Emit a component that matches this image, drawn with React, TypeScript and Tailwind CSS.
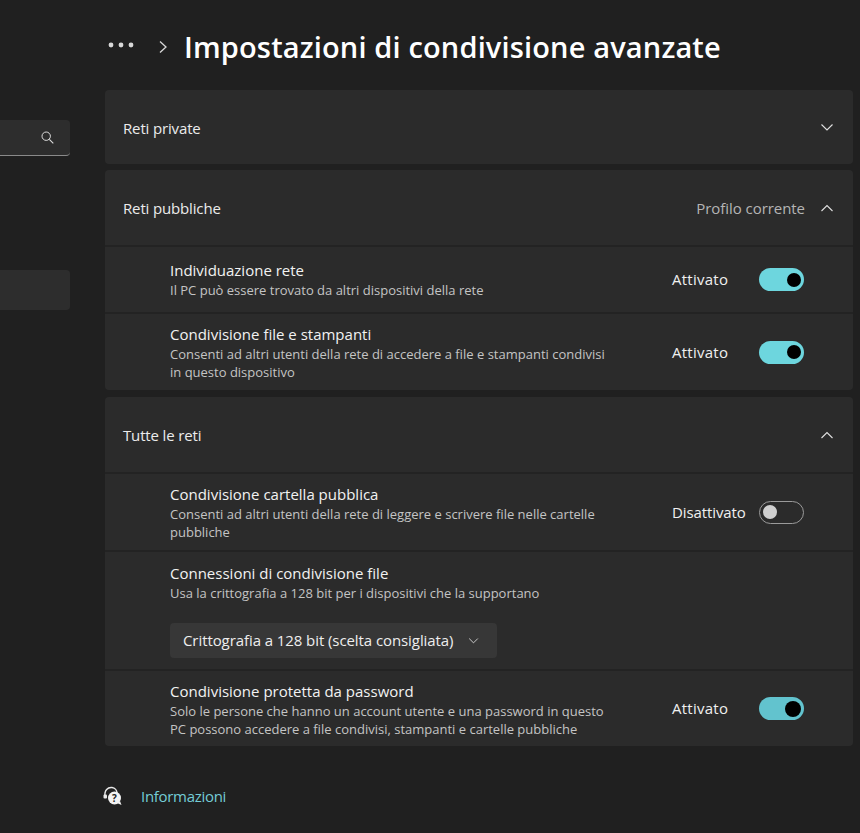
import React from "react";

const font = { fontFamily: '"Open Sans", "Noto Sans", sans-serif' };

function Chevron({ up = false, className = "" }: { up?: boolean; className?: string }) {
  return (
    <svg width="14" height="14" viewBox="0 0 14 14" fill="none" className={className}>
      <path d={up ? "M1.5 10 L7 4.5 L12.5 10" : "M1.5 4.5 L7 10 L12.5 4.5"} stroke="#e0e0e0" strokeWidth="1.1" />
    </svg>
  );
}

function Toggle({ on = true, dim = false }: { on?: boolean; dim?: boolean }) {
  if (!on)
    return (
      <div className="w-[45px] h-[23px] rounded-full border border-[#9a9a9a] flex items-center pl-[3px] shrink-0">
        <div className="w-[14px] h-[14px] rounded-full bg-[#d0d0d0]" />
      </div>
    );
  return (
    <div className={`w-[45px] h-[23px] rounded-full flex items-center justify-end shrink-0 ${dim ? "bg-[#62c3ce] pr-[3px]" : "bg-[#6dd6de] pr-[3px]"}`}>
      <div className={`rounded-full bg-black ${dim ? "w-[16px] h-[16px]" : "w-[14px] h-[14px]"}`} />
    </div>
  );
}

function Row({ title, desc, state, on, dim, h, top = "pt-[11px]", stateClass = "tracking-[0.25px]" }: { title: string; desc: string[]; state: string; on?: boolean; dim?: boolean; h: string; top?: string; stateClass?: string }) {
  return (
    <div className={`flex border-t-2 border-[#232323] pl-[65px] pr-[49px] ${h}`}>
      <div className={`flex-1 ${top}`}>
        <div className="text-[15px] leading-[19px] text-[#f2f2f2]">{title}</div>
        <div className="mt-px">
          {desc.map((d) => (
            <div key={d} className="text-[13px] leading-[18px] text-[#c4c4c4]">{d}</div>
          ))}
        </div>
      </div>
      <div className="flex items-center">
        <div className={`w-[87px] text-[15px] text-[#f0f0f0] ${stateClass}`}>{state}</div>
        <Toggle on={on} dim={dim} />
      </div>
    </div>
  );
}

function Header({ title, right, up, h = "h-[74px]" }: { title: string; right?: string; up?: boolean; h?: string }) {
  return (
    <div className={`flex items-center pl-[18px] pr-[19px] ${h}`}>
      <div className="flex-1 pt-[2px] text-[15px] text-[#ececec] tracking-[-0.15px]">{title}</div>
      {right && <div className="pt-[2px] text-[15px] text-[#b4b4b4] tracking-[-0.05px] mr-[15px]">{right}</div>}
      <Chevron up={up} />
    </div>
  );
}

export default function App() {
  return (
    <div className="flex h-[833px] w-[860px] overflow-hidden bg-[#202020]" style={font}>
      <aside className="w-[70px] shrink-0 flex flex-col pt-[120px]">
        <div className="h-[36px] rounded-r-[4px] bg-[#2d2d2d] border-b border-[#8a8a8a] flex items-center justify-end pr-[16px]">
          <svg width="13" height="13" viewBox="0 0 13 13" fill="none">
            <circle cx="5.2" cy="5.2" r="4.2" stroke="#dedede" strokeWidth="1" />
            <path d="M8.3 8.3 L12.3 12.3" stroke="#dedede" strokeWidth="1.1" />
          </svg>
        </div>
        <div className="h-[40px] mt-[114px] rounded-r-[4px] bg-[#2d2d2d]" />
      </aside>
      <main className="ml-[35px] w-[748px] shrink-0">
        <div className="h-[90px] flex items-center pt-[4px]">
          <svg width="26" height="6" viewBox="0 0 26 6" className="ml-[3px] mb-[4px]" fill="#d8d8d8">
            <circle cx="3" cy="3" r="2.4" />
            <circle cx="13" cy="3" r="2.4" />
            <circle cx="23" cy="3" r="2.4" />
          </svg>
          <svg width="10" height="14" viewBox="0 0 10 14" fill="none" className="ml-[24px]">
            <path d="M2 1.5 L8 7 L2 12.5" stroke="#d8d8d8" strokeWidth="1.3" />
          </svg>
          <h1 className="ml-[16px] text-[29px] font-semibold text-white tracking-[0.15px] whitespace-nowrap">Impostazioni di condivisione avanzate</h1>
        </div>
        <div className="flex flex-col gap-[6px]">
          <section className="rounded-[4px] bg-[#2b2b2b]">
            <Header title="Reti private" />
          </section>
          <section className="rounded-[4px] bg-[#2b2b2b] h-[220px]">
            <Header title="Reti pubbliche" right="Profilo corrente" up h="h-[75px]" />
            <Row title="Individuazione rete" desc={["Il PC può essere trovato da altri dispositivi della rete"]} state="Attivato" on h="h-[67px]" top="pt-[14px]" />
            <Row title="Condivisione file e stampanti" desc={["Consenti ad altri utenti della rete di accedere a file e stampanti condivisi", "in questo dispositivo"]} state="Attivato" on h="h-[78px]" />
          </section>
          <section className="rounded-[4px] bg-[#2b2b2b] mt-px">
            <Header title="Tutte le reti" up h="h-[75px]" />
            <Row title="Condivisione cartella pubblica" desc={["Consenti ad altri utenti della rete di leggere e scrivere file nelle cartelle", "pubbliche"]} state="Disattivato" on={false} h="h-[78px]" stateClass="tracking-[-0.1px]" />
            <div className="border-t-2 border-[#232323] h-[119px] pl-[65px] pt-[12px]">
              <div className="text-[15px] leading-[19px] text-[#f2f2f2]">Connessioni di condivisione file</div>
              <div className="mt-px text-[13px] leading-[18px] text-[#c4c4c4]">Usa la crittografia a 128 bit per i dispositivi che la supportano</div>
              <div className="mt-[21px] w-[327px] h-[35px] rounded-[4px] bg-[#373737] flex items-center pl-[13px] text-[15px] text-[#eeeeee] tracking-[-0.08px]">
                Crittografia a 128 bit (scelta consigliata)
                <Chevron className="ml-[15px] w-[11px] h-[11px]" />
              </div>
            </div>
            <Row title="Condivisione protetta da password" desc={["Solo le persone che hanno un account utente e una password in questo", "PC possono accedere a file condivisi, stampanti e cartelle pubbliche"]} state="Attivato" on dim h="h-[77px]" />
          </section>
        </div>
        <div className="mt-[36px] flex items-center h-[28px]">
          <svg width="19" height="20" viewBox="0 0 19 20" fill="none" className="-ml-[2px]">
            <path d="M2 11 C1 4 5 1 9 1.5 C12 2 14 4.5 14 7" stroke="#e8e8e8" strokeWidth="1.4" fill="none" />
            <rect x="0.5" y="8.5" width="3.5" height="4" rx="1" fill="#e8e8e8" />
            <circle cx="11.5" cy="12" r="6.5" fill="#f2f2f2" />
            <path d="M14 17 L18.5 19 L17 15 Z" fill="#f2f2f2" />
            <text x="11.5" y="15.5" textAnchor="middle" fontSize="10" fontWeight="700" fill="#202020">?</text>
          </svg>
          <span className="ml-[19px] text-[15px] text-[#74ccd6] tracking-[-0.3px]">Informazioni</span>
        </div>
      </main>
    </div>
  );
}
